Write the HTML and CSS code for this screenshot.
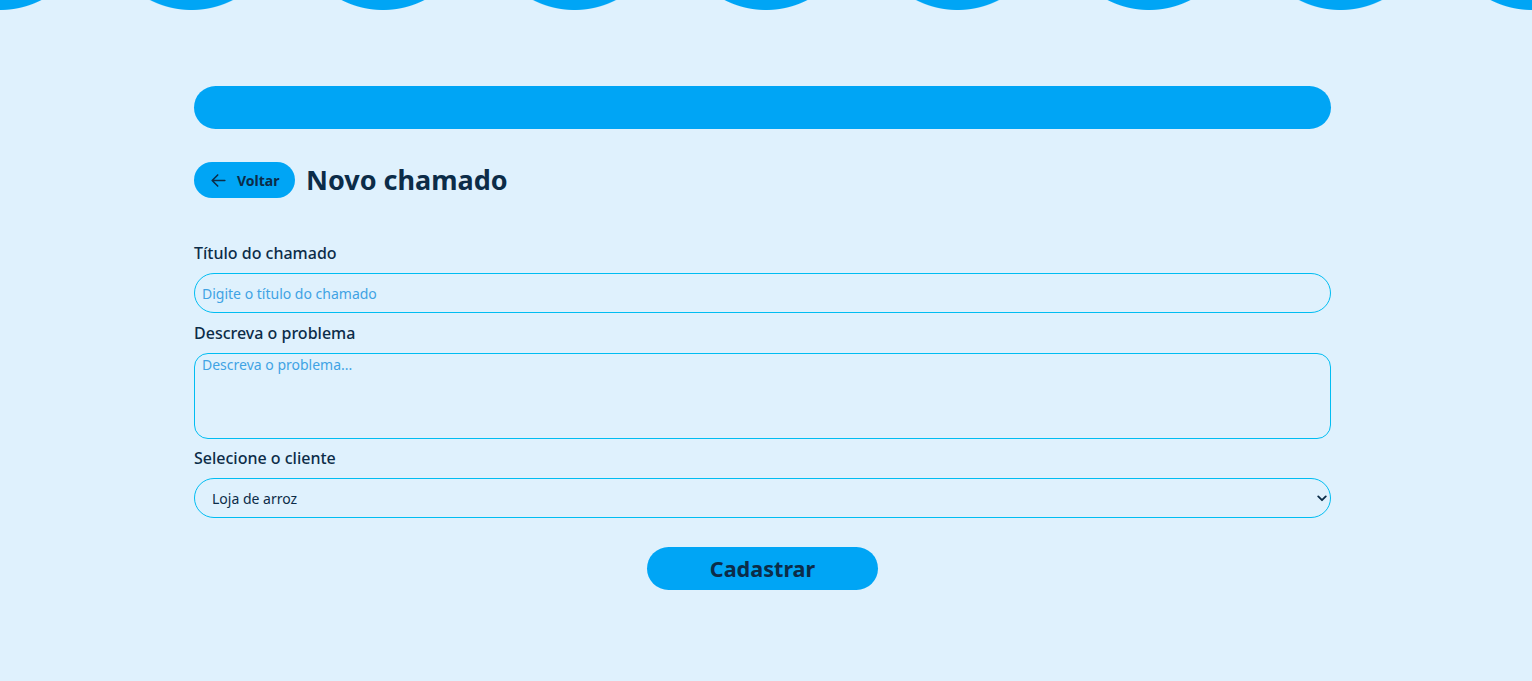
FILE: index.html
```html
<!DOCTYPE html>
<html lang="pt-BR">
<head>
<meta charset="utf-8">
<title>Novo chamado</title>
<link rel="stylesheet" href="styles.css">
</head>
<body>
<div class="waves"></div>
<main class="page">
  <div class="topbar"></div>
  <div class="heading">
    <button class="back" type="button">
      <svg class="back-icon" viewBox="0 0 24 24" width="19" height="19" aria-hidden="true"><path d="M20 12H4.5M11 5l-7 7 7 7" fill="none" stroke="currentColor" stroke-width="2" stroke-linecap="round" stroke-linejoin="round"/></svg>
      <span>Voltar</span>
    </button>
    <h1 class="title">Novo chamado</h1>
  </div>
  <form class="form">
    <label class="label" for="titulo">Título do chamado</label>
    <input class="field" id="titulo" type="text" placeholder="Digite o título do chamado">
    <label class="label" for="descricao">Descreva o problema</label>
    <textarea class="field area" id="descricao" placeholder="Descreva o problema..."></textarea>
    <label class="label" for="cliente">Selecione o cliente</label>
    <div class="select-wrap">
      <select class="field select" id="cliente">
        <option>Loja de arroz</option>
      </select>
      <svg class="chev" viewBox="0 0 12 8" width="10" height="7" aria-hidden="true"><path d="M1.5 1.5 6 6l4.5-4.5" fill="none" stroke="currentColor" stroke-width="2.2" stroke-linecap="round" stroke-linejoin="round"/></svg>
    </div>
    <div class="actions">
      <button class="submit" type="button">Cadastrar</button>
    </div>
  </form>
</main>
</body>
</html>
```
FILE: styles.css
```css
* { box-sizing: border-box; }
html, body { margin: 0; padding: 0; }
body {
  background: #dff1fd;
  font-family: "Noto Sans", "Open Sans", sans-serif;
  color: #0c2c48;
  min-height: 681px;
}
.waves {
  height: 12px;
  background-image: radial-gradient(circle at 50% -81px, #00a5f5 90.5px, rgba(0,165,245,0) 91.5px);
  background-size: 191.5px 12px;
  background-position: -95.75px 0;
  background-repeat: repeat-x;
}
.page {
  width: 1137px;
  margin-left: 194px;
  padding-top: 74px;
}
.topbar {
  height: 43px;
  border-radius: 22px;
  background: #00a5f5;
}
.heading {
  display: flex;
  align-items: center;
  gap: 11px;
  margin-top: 33px;
}
.back {
  display: flex;
  align-items: center;
  gap: 9px;
  height: 36px;
  width: 101px;
  padding: 0 0 0 15px;
  border: none;
  border-radius: 18px;
  background: #00a5f5;
  color: #0c2c48;
  font-family: inherit;
  font-size: 14px;
  font-weight: 700;
  cursor: pointer;
}
.back-icon { flex: none; }
.title {
  margin: 0;
  font-size: 27px;
  font-weight: 700;
  line-height: 36px;
  color: #0c2c48;
}
.form {
  display: flex;
  flex-direction: column;
  margin-top: 44px;
}
.label {
  font-size: 16px;
  font-weight: 500;
  line-height: 22px;
  margin-bottom: 9px;
  color: #0c2c48;
}
.field {
  width: 100%;
  height: 40px;
  border: 1px solid #00bdf2;
  border-radius: 20px;
  background: transparent;
  font-family: inherit;
  font-size: 14px;
  color: #0c2c48;
  padding: 0 7px;
  margin-bottom: 9px;
  outline: none;
}
.field::placeholder { color: #3fa3e4; opacity: 1; }
.area {
  height: 86px;
  border-radius: 14px;
  padding: 1px 7px;
  resize: none;
  line-height: 20px;
  margin-bottom: 8px;
}
.select-wrap { position: relative; }
.select {
  appearance: none;
  -webkit-appearance: none;
  padding: 0 17px;
  margin-bottom: 0;
}
.chev {
  position: absolute;
  right: 4px;
  top: 17px;
  color: #0c2c48;
  pointer-events: none;
}
.actions {
  display: flex;
  justify-content: center;
  margin-top: 29px;
}
.submit {
  width: 231px;
  height: 43px;
  border: none;
  border-radius: 22px;
  background: #00a5f5;
  color: #0c2c48;
  font-family: inherit;
  font-size: 21.6px;
  font-weight: 700;
  cursor: pointer;
}
```
